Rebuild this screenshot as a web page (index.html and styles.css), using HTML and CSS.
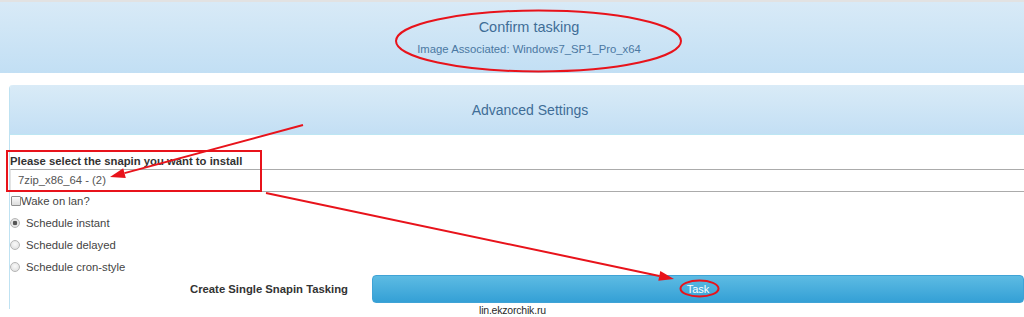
FILE: index.html
```html
<!DOCTYPE html>
<html>
<head>
<meta charset="utf-8">
<link rel="stylesheet" href="styles.css">
</head>
<body>
<div class="page">
  <header class="top">
    <div class="top-title">Confirm tasking</div>
    <div class="top-sub">Image Associated: Windows7_SP1_Pro_x64</div>
  </header>
  <section class="panel">
    <div class="panel-heading">Advanced Settings</div>
    <div class="panel-body">
      <label class="field-label">Please select the snapin you want to install</label>
      <div class="select">7zip_x86_64 - (2)</div>
      <div class="check-row"><span class="checkbox"></span>Wake on lan?</div>
      <div class="radio-row first"><span class="radio checked"></span>Schedule instant</div>
      <div class="radio-row"><span class="radio"></span>Schedule delayed</div>
      <div class="radio-row"><span class="radio"></span>Schedule cron-style</div>
      <div class="action-row">
        <div class="action-label">Create Single Snapin Tasking</div>
        <button class="btn">Task</button>
      </div>
    </div>
  </section>
</div>
<div class="watermark">lin.ekzorchik.ru</div>
<svg class="annot" width="1024" height="317" viewBox="0 0 1024 317">
  <ellipse cx="538.5" cy="41" rx="142.5" ry="30.5" fill="none" stroke="#e8131b" stroke-width="2"/>
  <rect x="7" y="151" width="254" height="40" fill="none" stroke="#e8131b" stroke-width="2"/>
  <line x1="303" y1="125" x2="124.5" y2="173.1" stroke="#e8131b" stroke-width="2"/>
  <polygon points="110,177 125.8,177.9 123.2,168.3" fill="#e8131b"/>
  <line x1="266" y1="193" x2="659.3" y2="275.9" stroke="#e8131b" stroke-width="2"/>
  <polygon points="674,279 658.3,280.8 660.3,271" fill="#e8131b"/>
  <ellipse cx="699.5" cy="288.5" rx="19" ry="8" fill="none" stroke="#e8131b" stroke-width="2"/>
</svg>
</body>
</html>
```
FILE: styles.css
```css
html, body {
  margin: 0;
  padding: 0;
  overflow: hidden;
  background: #fff;
  width: 1024px;
  height: 317px;
}
body {
  font-family: "Liberation Sans", Arial, sans-serif;
  color: #333;
  position: relative;
}
.page {
  width: 1058px;
}
.top {
  border-top: 2px solid #e2e2e2;
  height: 71px;
  box-sizing: content-box;
  background: linear-gradient(to bottom, #d8eaf7, #c2dff4);
  text-align: center;
  padding: 0;
  display: flex;
  flex-direction: column;
  align-items: center;
}
.top-title {
  margin-top: 16px;
  font-size: 14.5px;
  line-height: 18px;
  color: #3f6d97;
}
.top-sub {
  margin-top: 6px;
  font-size: 11.3px;
  line-height: 14px;
  color: #4a78a2;
}
.panel {
  margin-top: 12px;
  margin-left: 9px;
  width: 1040px;
  border-left: 1px solid #bfe2f2;
  border-top-left-radius: 4px;
  overflow: hidden;
}
.panel-heading {
  height: 49px;
  border-bottom: 1px solid #bde6f3;
  background: linear-gradient(to bottom, #d9ebf7, #c3dff4);
  display: flex;
  align-items: center;
  justify-content: center;
  font-size: 14px;
  color: #3f6d97;
  padding-top: 0;
}
.panel-body {
  padding: 18px 0 6px 0;
  font-size: 11.3px;
}
.field-label {
  display: block;
  font-weight: bold;
  line-height: 16px;
  height: 16px;
  color: #333;
}
.select {
  height: 23px;
  box-sizing: border-box;
  border: 1px solid #ababab;
  border-left-color: #e3e3e3;
  border-right: none;
  padding-left: 7px;
  line-height: 21px;
  font-size: 11.3px;
  color: #555;
}
.check-row {
  height: 18px;
  display: flex;
  align-items: center;
  color: #444;
}
.checkbox {
  width: 8px;
  height: 8px;
  border: 1px solid #8f8f8f;
  border-radius: 1px;
  margin-left: 1px;
  background: linear-gradient(to bottom, #fbfbfb, #dcdcdc);
  box-sizing: content-box;
  margin-top: -1px;
}
.radio-row {
  height: 16px;
  margin-top: 6px;
  display: flex;
  align-items: center;
  color: #444;
}
.radio-row.first {
  margin-top: 5px;
}
.radio {
  width: 8px;
  height: 8px;
  border: 1px solid #b5b5b5;
  border-radius: 50%;
  background: radial-gradient(circle at 50% 40%, #fafafa, #dadada);
  margin-left: 0px;
  margin-right: 6px;
  box-sizing: content-box;
  position: relative;
}
.radio.checked {
  background: radial-gradient(circle at 50% 50%, #555 0, #555 2px, #e8e8e8 2.6px, #d4d4d4 100%);
}
.action-row {
  display: flex;
  height: 28px;
  align-items: center;
}
.action-label {
  width: 362px;
  box-sizing: border-box;
  padding-right: 24px;
  text-align: right;
  font-weight: bold;
  color: #333;
}
.btn {
  width: 652px;
  height: 28px;
  border: 1px solid #3fa3d6;
  border-radius: 4px;
  background: linear-gradient(to bottom, #5dbbe3, #34a0d6);
  color: #fff;
  font-family: "Liberation Sans", Arial, sans-serif;
  font-size: 11px;
  padding: 0;
}
.watermark {
  position: absolute;
  left: 479px;
  top: 303px;
  font-size: 10.5px;
  line-height: 14px;
  color: #2a2a2a;
  letter-spacing: -0.2px;
}
.annot {
  position: absolute;
  left: 0;
  top: 0;
  pointer-events: none;
}
```
